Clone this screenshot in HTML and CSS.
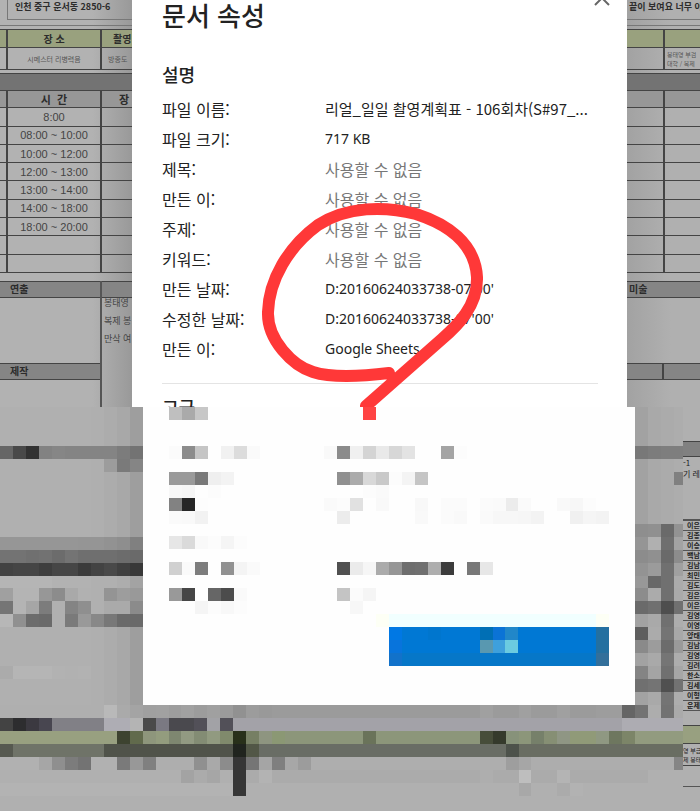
FILE: index.html
```html
<!DOCTYPE html>
<html lang="ko">
<head>
    <meta charset="UTF-8">
    <meta name="viewport" content="width=device-width, initial-scale=1.0">
    <title>문서 속성</title>
    <link rel="stylesheet" href="styles.css">
</head>
<body>

    <!-- Spreadsheet and dialog -->
    <main class="top">
        <section class="sheet sheet-left">
            <p class="address">인천 중구 운서동 2850-6</p>
            <div class="rule"></div>
            <table class="place">
                <colgroup><col class="col-edge"><col class="col-time"><col></colgroup>
                <tr class="green"><th></th><th>장 소</th><th class="cut">촬영</th></tr>
                <tr class="note"><td></td><td>시메스터 리병력음</td><td class="cut-note">방종도</td></tr>
            </table>
            <div class="band"></div>
            <table class="schedule">
                <colgroup><col class="col-edge"><col class="col-time"><col></colgroup>
                <tr class="head"><th></th><th>시 &nbsp;간</th><th>장</th></tr>
                <tr><td></td><td>8:00</td><td></td></tr>
                <tr><td></td><td>08:00 ~ 10:00</td><td></td></tr>
                <tr><td></td><td>10:00 ~ 12:00</td><td></td></tr>
                <tr><td></td><td>12:00 ~ 13:00</td><td></td></tr>
                <tr><td></td><td>13:00 ~ 14:00</td><td></td></tr>
                <tr><td></td><td>14:00 ~ 18:00</td><td></td></tr>
                <tr><td></td><td>18:00 ~ 20:00</td><td></td></tr>
                <tr><td></td><td></td><td></td></tr>
                <tr><td></td><td></td><td></td></tr>
            </table>
            <div class="staff">
                <div class="staff-main">
                    <h3>연출</h3>
                    <div class="staff-space"></div>
                    <h3>제작</h3>
                </div>
                <div class="staff-side">
                    <h3></h3>
                    <p>봉태영</p>
                    <p>복제 봉</p>
                    <p>만삭 여</p>
                </div>
            </div>
        </section>

        <section class="dialog">
            <button class="close" aria-label="닫기">
                <svg viewBox="0 0 16 16"><path d="M1 1L15 15M15 1L1 15"/></svg>
            </button>
            <h1>문서 속성</h1>
            <h2>설명</h2>
            <dl>
                <dt>파일 이름:</dt><dd class="file">리얼_일일 촬영계획표 - 106회차(S#97_...</dd>
                <dt>파일 크기:</dt><dd class="latin">717 KB</dd>
                <dt>제목:</dt><dd class="none">사용할 수 없음</dd>
                <dt>만든 이:</dt><dd class="none">사용할 수 없음</dd>
                <dt>주제:</dt><dd class="none">사용할 수 없음</dd>
                <dt>키워드:</dt><dd class="none">사용할 수 없음</dd>
                <dt>만든 날짜:</dt><dd class="latin">D:20160624033738-07'00'</dd>
                <dt>수정한 날짜:</dt><dd class="latin">D:20160624033738-07'00'</dd>
                <dt>만든 이:</dt><dd class="latin">Google Sheets</dd>
            </dl>
            <h2 class="advanced">고급</h2>
        </section>

        <section class="sheet sheet-right">
            <p class="address">끝이 보여요 너무 아</p>
            <div class="rule"></div>
            <table class="place">
                <colgroup><col class="col-half"><col></colgroup>
                <tr class="green"><th></th><th></th></tr>
                <tr class="note"><td></td><td class="cut-note two">봉태영 부검<br>대학 / 복제</td></tr>
            </table>
            <div class="band"></div>
            <table class="schedule">
                <colgroup><col class="col-half"><col></colgroup>
                <tr class="head"><th></th><th></th></tr>
                <tr><td></td><td></td></tr>
                <tr><td></td><td></td></tr>
                <tr><td></td><td></td></tr>
                <tr><td></td><td></td></tr>
                <tr><td></td><td></td></tr>
                <tr><td></td><td></td></tr>
                <tr><td></td><td></td></tr>
                <tr><td></td><td></td></tr>
                <tr><td></td><td></td></tr>
            </table>
            <div class="staff">
                <div class="staff-main">
                    <h3>미술</h3>
                    <div class="staff-space"></div>
                    <div class="split"><h3></h3><h3></h3></div>
                </div>
            </div>
        </section>

        <!-- Red pen mark -->
        <svg class="mark" viewBox="0 0 700 407">
            <path d="M389 373C373 375 335 379 313 372C293 366 267 340 268 312C269 280 288 247 318 225C347 206 385 206 416 214C447 224 475 243 477 277C478 306 457 326 442 339L366 406"/>
        </svg>
    </main>

    <!-- Pixelated part -->
    <section class="bottom">
        <svg id="backdrop" class="backdrop" viewBox="0 0 54 31"></svg>
        <div class="panel">
            <svg id="details" class="details" viewBox="0 0 38 17"></svg>
            <button class="confirm" aria-label="확인">
                <svg id="confirm" viewBox="0 0 17 3" preserveAspectRatio="none"></svg>
            </button>
        </div>
        <aside class="crew">
            <h3></h3>
            <p class="crew-note">-1<br>기 레</p>
            <ul>
                <li>이은</li><li>김종</li><li>이승</li><li>백남</li><li>김남</li>
                <li>최민</li><li>김도</li><li>김은</li><li>이은</li><li>김영</li>
                <li>이영</li><li>양태</li><li>김남</li><li>김영</li><li>김려</li>
                <li>한소</li><li>김세</li><li>이형</li><li>운제</li>
            </ul>
            <div class="crew-green"></div>
            <p class="crew-foot">영 부급<br>제 봉태</p>
            <div class="crew-end"></div>
        </aside>
    </section>

    <script src="mosaic.js"></script>
</body>
</html>
```
FILE: styles.css
```css
* {
    box-sizing: border-box;
}

body {
    margin: 0;
    background-color: #b0b0b0;
    color: #222;
    font-family: "Noto Sans CJK KR", sans-serif;
}

h1, h2, h3, p, dl, dd, ul {
    margin: 0;
    padding: 0;
}

button {
    border: none;
    padding: 0;
    background: none;
    cursor: pointer;
}

svg {
    display: block;
}

.top {
    position: relative;
    display: grid;
    grid-template-columns: 132fr 495fr 73fr;
    height: 407px;
    overflow: hidden;
}

/* Spreadsheet */
.sheet {
    display: flex;
    flex-direction: column;
    min-width: 0;
    overflow: hidden;
    white-space: nowrap;
    color: #2c2c2c;
}

.sheet-left {
    background: linear-gradient(90deg, #b2b2b2 70%, #999);
}

.sheet-right {
    background: linear-gradient(90deg, #a2a2a2, #b0b0b0 60%);
}

.address {
    height: 20px;
    padding-left: 7px;
    border-bottom: 1px solid #777;
    font-size: 9px;
    font-weight: bold;
    line-height: 13px;
}

.sheet-left .address {
    margin-left: 7px;
    border-left: 1px solid #777;
}

.sheet-right .address {
    padding-left: 2px;
}

.rule {
    height: 6px;
    border-bottom: 1px solid #777;
}

table {
    width: 100%;
    table-layout: fixed;
    border-spacing: 0;
}

th, td {
    padding: 0;
    border-right: 2px solid #444;
    border-bottom: 1px solid #444;
    overflow: hidden;
    text-align: center;
}

th:last-child, td:last-child {
    border-right: none;
}

.col-edge {
    width: 8px;
}

.col-time {
    width: 94px;
}

.col-half {
    width: 38px;
}

.place {
    margin-top: 3px;
    border-top: 1px solid #444;
    font-size: 10px;
    line-height: 12px;
}

.green {
    height: 18px;
    background-color: #99a17e;
}

.note {
    height: 22px;
    font-size: 7px;
    line-height: 8px;
    color: #555;
}

.place .cut {
    padding-left: 11px;
    text-align: left;
}

.place .cut-note {
    padding-left: 6px;
    text-align: left;
}

.place .two {
    padding-left: 2px;
    font-size: 6px;
    line-height: 9px;
}

.band {
    height: 18px;
    margin-top: 3px;
    border-top: 1px solid #444;
    border-bottom: 1px solid #444;
    background-color: #737373;
}

.schedule {
    height: 182px;
    font-size: 10px;
    line-height: 12px;
}

.schedule td {
    height: 18px;
    font-family: "Liberation Sans", sans-serif;
    font-size: 11px;
    color: #444;
}

.schedule .head {
    height: 17px;
    background-color: #979797;
}

.schedule .head th {
    font-size: 11px;
}

.schedule .head th:nth-child(3) {
    padding-left: 14px;
}

.staff {
    display: flex;
    flex: 1;
    margin-top: 8px;
}

.staff h3 {
    height: 17px;
    padding-left: 10px;
    border-top: 1px solid #444;
    border-bottom: 1px solid #444;
    background-color: #858585;
    font-size: 10px;
    line-height: 14px;
}

.staff-main {
    flex: 1;
}

.sheet-left .staff-main {
    flex: 0 0 102px;
    border-right: 2px solid #555;
}

.sheet-right .staff h3 {
    padding-left: 2px;
}

.staff-space {
    height: 65px;
}

.split {
    display: grid;
    grid-template-columns: 1fr 1fr;
}

.split h3:first-child {
    border-right: 2px solid #444;
}

.staff-side {
    flex: 1;
}

.staff-side p {
    padding-left: 2px;
    font-size: 9px;
    line-height: 18px;
    color: #444;
}

.staff-side h3 + p {
    margin-top: -4px;
}

/* Dialog */
.dialog {
    position: relative;
    padding: 0 29px 0 30px;
    background-color: #fff;
    overflow: hidden;
}

.close {
    position: absolute;
    top: -10px;
    right: 17px;
    width: 16px;
    height: 16px;
}

.close svg {
    fill: none;
    stroke: #666;
    stroke-width: 2;
}

.dialog h1 {
    font-size: 26px;
    font-weight: 500;
    line-height: 30px;
}

.dialog h2 {
    margin-top: 31px;
    font-size: 18px;
    font-weight: 500;
    line-height: 26px;
}

.dialog dl {
    display: grid;
    grid-template-columns: 163px 1fr;
    margin-top: 7px;
    padding-bottom: 19px;
    border-bottom: 1px solid #e4e4e4;
    font-size: 16px;
    line-height: 30px;
}

.dialog dd {
    height: 30px;
    white-space: nowrap;
}

.dialog .file {
    font-size: 15px;
}

.dialog .none {
    color: #777;
}

.dialog .latin {
    font-family: "Noto Sans", sans-serif;
    font-size: 14px;
}

.dialog .advanced {
    margin-top: 10px;
}

.mark {
    position: absolute;
    top: 0;
    left: 0;
    width: 100%;
    fill: none;
    stroke: #ff3838;
    stroke-width: 12;
    stroke-linecap: round;
    pointer-events: none;
}

/* Pixelated part */
.bottom {
    position: relative;
    display: grid;
    grid-template-columns: 143fr 492fr 65fr;
    overflow: hidden;
}

.backdrop {
    position: absolute;
    top: 0;
    left: 0;
    width: 100%;
}

.panel {
    position: relative;
    grid-column: 2;
    align-self: start;
    padding-bottom: 39px;
    background-color: #fefefe;
}

.details {
    width: 100%;
}

.confirm {
    display: block;
    width: 220px;
    height: 39px;
    margin-left: 50%;
    background-color: #0078d4;
}

.confirm svg {
    width: 100%;
    height: 100%;
}

.crew {
    position: relative;
    width: 17px;
    height: 404px;
    margin-left: auto;
    padding-top: 34px;
    background-color: #b0b0b0;
    overflow: hidden;
    white-space: nowrap;
}

.crew h3 {
    height: 16px;
    border-top: 1px solid #444;
    border-bottom: 1px solid #444;
    background-color: #808080;
}

.crew-note {
    height: 62px;
    font-size: 8px;
    line-height: 11px;
}

.crew ul {
    border-top: 2px solid #555;
    list-style: none;
}

.crew li {
    height: 10px;
    padding-left: 4px;
    border-bottom: 1px solid #555;
    font-size: 7px;
    font-weight: bold;
    line-height: 9px;
}

.crew-green {
    height: 19px;
    margin-top: 14px;
    border-top: 1px solid #444;
    border-bottom: 1px solid #444;
    background-color: #98a080;
}

.crew-foot {
    height: 22px;
    padding-top: 2px;
    border-bottom: 1px solid #444;
    font-size: 6px;
    line-height: 9px;
}

.crew-end {
    height: 21px;
    border-bottom: 1px solid #555;
}
```
FILE: mosaic.js
```js
// Each block is [row, first column, colours]; "-" leaves a cell empty, "*n" repeats it.
// Two digits stand for a grey, six for a full colour.
const backdrop = [
    [3, 0, '66 49 32 82 86 84*4 7c 73'],
    [4, 8, '9c 7a 85'],
    [10, 0, '96*6 95*2 92 8e 80'],
    [11, 0, '73*2 70 72 6c 74 6f*3 6c 6a'],
    [12, 0, '42 45 45 3e 46 46 3b 43 49 40 38'],
    [13, 0, 'b5*4 b2*3 b0*2 ad a3'],
    [14, 0, 'a0 b4 b4 97 8c a9 b1 b0 94 9d 99'],
    [15, 0, '75 b4 a6 7c b0 84 8f b0 aa aa 8b'],
    [16, 0, 'b7 90 6c 6a b0 7a 99 88 78 6a 6a'],
    [20, 0, 'ab b5*3 b2 b1 b2'],
    [23, 0, 'af*8 b9 aa a4 a0 a1 9d a1 9c a0 9b 91 9c 99 9b*16 a0 9b*2 a0 9b*2 a0 9b*2 9d 9d 65 73'],
    [24, 0, '43 2d2d2f 3b3940 484650 818086*4 aeadb4*2 b4 4a 7a7982 4a494e*2 525058 a2a2a6 525058 a3a2a8*30 adacb2*5'],
    [25, 0, '98a080*9 3d4330 616a4c 8e967c 939c7e 7e8770 929a82 838c74 919a80 808a6c 28301a 767f64 8e9580 8b9874 8c967a*6 6a735a 8c967a*8 474d3a 353a2c 87927a 8c967a 76806a 868f74 8f9684 909a78*2 8f9882 6e775f 7c8568 929b7f*4'],
    [26, 0, '565950 6f7368*7 50534a*10 20241e 525747 696d65*19 4d524b 696d62*13'],
    [27, 0, 'b1*3 a6 8f 7c 73 b1*2 7a 98 80 ae*3 90 a9 8c 36 75 a5 7f a7 9c ae*15 9e a6 ad*11 85'],
    [28, 11, 'b0*3 a3 ab a6 b0 36 ab b3 ab*16 ae ab*2 be ab*2 b4 ab*6'],
    [29, 0, 'b3*18 36 b0*21 a8 b0*2 ab b2'],
    [3, 49, '78 7c 7e 7e'],
    [5, 52, '80'],
    [9, 49, '8e 90 6a 93'],
    [10, 49, '95 b0 6f a3'],
    [11, 49, '8c 90 6a 8c'],
    [12, 49, '93 9b 70 a0'],
    [13, 49, '98 68 70 ab'],
    [14, 49, '8c ab 70 aa'],
    [15, 49, '6a 70 4e 70'],
    [16, 51, '70'],
    [17, 49, '5e ab 74 a8'],
    [18, 49, '8a 9c 6c 9a'],
    [19, 51, '75'],
    [20, 49, '84 a4 70 a6'],
    [21, 49, '70 74 50 72'],
    [22, 51, '74'],
    [23, 50, 'ad 72 aa']
];

const details = [
    [0, 2, 'bf aa c7 -*12 ff4343'],
    [3, 2, 'fb 8c c5 - f1 dc fa -*5 f9 8b f0 d4 e9 d7 e3 - - a4 fc'],
    [5, 2, '9a 9a 79 ef f3 -*8 90 ab d8 c9 fc f4 c5'],
    [6, 2, 'f8 f6 - fc -*11 fc fa'],
    [7, 2, '82 26 fd -*9 fa fc e1 - f9 - - f8 - fb fb - fb fa ec fa - - f9 f7 fc'],
    [8, 2, 'fa f9 f2 -*10 ec -*5 f9 - fb f9 - fa f7 f7 f6 f3 - - f0 f5 f3'],
    [10, 2, 'e6 da f9 fc f5 fc'],
    [12, 2, 'd0 fa 7d - 91 f4 fa -*6 50 eb f6 ab 96 6e 70 ae 3c - 78 e7'],
    [14, 2, '99 46 - 66 4c fa -*7 c4 fb f5'],
    [15, 4, 'f5 fc f8 fc -*8 f7'],
    [16, 18, 'fdfff5 f1ffff*16 fdfff5']
];

const confirm = [
    [0, 0, '0078e4 - - 0076ce - - - 006fb5 0b73d6 2187c9 -*6 2470a0'],
    [1, 0, '0874dc -*6 5998b0 3ea0dc 6bcbe0 -*6 2470a0'],
    [2, 0, '1272ca 0677c8*15 336f9a']
];

function addRect(svg, x, y, width, height, color) {
    const rect = document.createElementNS('http://www.w3.org/2000/svg', 'rect');
    rect.setAttribute('x', x);
    rect.setAttribute('y', y);
    rect.setAttribute('width', width);
    rect.setAttribute('height', height);
    rect.setAttribute('fill', color);
    rect.setAttribute('shape-rendering', 'crispEdges');
    svg.appendChild(rect);
}

function draw(id, rows) {
    const svg = document.getElementById(id);
    rows.forEach(([row, start, cells]) => {
        let column = start;
        cells.split(' ').forEach(cell => {
            const [value, times] = cell.split('*');
            const count = Number(times || 1);
            if (value !== '-') {
                const color = value.length === 2 ? value.repeat(3) : value;
                addRect(svg, column, row, count, 1, '#' + color);
            }
            column += count;
        });
    });
}

// Shadow of the dialog on both sides
const backdropSvg = document.getElementById('backdrop');
[[7, 'af'], [8, 'ac'], [9, 'a8'], [10, '9e'], [49, 'a2'], [50, 'a9'], [51, 'ab'], [52, 'ad']].forEach(([column, grey]) => {
    addRect(backdropSvg, column, 0, 1, 23, '#' + grey.repeat(3));
});

draw('backdrop', backdrop);
draw('details', details);
draw('confirm', confirm);
```
